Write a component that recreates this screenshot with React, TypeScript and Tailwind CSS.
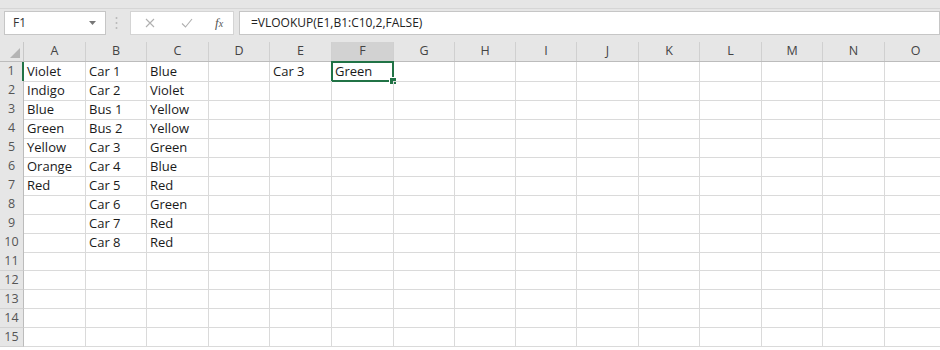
const colWidths = [62, 61, 62, 61, 62, 62, 61, 61, 61, 62, 61, 62, 61, 62, 62];
const colNames = ["A", "B", "C", "D", "E", "F", "G", "H", "I", "J", "K", "L", "M", "N", "O"];

const colA = ["Violet", "Indigo", "Blue", "Green", "Yellow", "Orange", "Red"];
const colB = ["Car 1", "Car 2", "Bus 1", "Bus 2", "Car 3", "Car 4", "Car 5", "Car 6", "Car 7", "Car 8"];
const colC = ["Blue", "Violet", "Yellow", "Yellow", "Green", "Blue", "Red", "Green", "Red", "Red"];

const cellValue = (row: number, col: number): string => {
  if (col === 0) return colA[row] ?? "";
  if (col === 1) return colB[row] ?? "";
  if (col === 2) return colC[row] ?? "";
  if (row === 0 && col === 4) return "Car 3";
  if (row === 0 && col === 5) return "Green";
  return "";
};

const gridCols = "grid grid-cols-[24px_62px_61px_62px_61px_62px_62px_61px_61px_61px_62px_61px_62px_61px_62px_62px]";

const FormulaBar = () => (
  <div className="h-[42px] bg-[#e6e6e6]">
    <div className="h-[9px] border-b border-[#d6d6d6]" />
    <div className="flex items-center h-[25px] mt-px">
      <div className="ml-[4px] w-[102px] h-[24px] bg-white border border-[#c6c6c6] flex items-center justify-between pl-[8px] pr-[9px] text-[12px] text-[#333]">
        <span>F1</span>
        <svg width="7" height="4" viewBox="0 0 7 4">
          <path d="M0 0h7L3.5 4z" fill="#777" />
        </svg>
      </div>
      <svg className="ml-[9px]" width="3" height="14" viewBox="0 0 3 14">
        <circle cx="1.5" cy="2" r="1" fill="#b8b8b8" />
        <circle cx="1.5" cy="7" r="1" fill="#b8b8b8" />
        <circle cx="1.5" cy="12" r="1" fill="#b8b8b8" />
      </svg>
      <div className="ml-[12px] w-[104px] h-[24px] bg-white border border-[#d4d4d4] flex items-center">
        <svg className="ml-[14px]" width="10" height="10" viewBox="0 0 10 10">
          <path d="M1 1l8 8M9 1l-8 8" stroke="#b0b0b0" strokeWidth="1.1" />
        </svg>
        <svg className="ml-[26px]" width="12" height="10" viewBox="0 0 12 10">
          <path d="M1 5.5l3.5 3.5L11 1" stroke="#b0b0b0" strokeWidth="1.1" fill="none" />
        </svg>
        <span className="ml-[22px] font-['Liberation_Serif',serif] italic text-[13px] text-[#555] leading-none">
          f<span className="text-[10px]">x</span>
        </span>
      </div>
      <div className="ml-[5px] flex-1 h-[24px] bg-white border border-[#c6c6c6] flex items-center pl-[11px] text-[12px] text-[#222]">
        =VLOOKUP(E1,B1:C10,2,FALSE)
      </div>
    </div>
  </div>
);

const HeaderRow = () => (
  <div className={`${gridCols} h-[20px] bg-[#e6e6e6] border-b border-[#bcbcbc]`}>
    <div className="relative border-r border-[#c8c8c8]">
      <svg className="absolute right-[3px] bottom-[3px]" width="10" height="10" viewBox="0 0 10 10">
        <path d="M10 0v10H0z" fill="#b4b4b4" />
      </svg>
    </div>
    {colNames.map((name) => (
      <div
        key={name}
        className={`flex items-center justify-center text-[12.5px] text-[#444] border-r border-[#d0d0d0] ${
          name === "F" ? "bg-[#d2d2d2] text-[#333]" : ""
        }`}
      >
        {name}
      </div>
    ))}
  </div>
);

export default function App() {
  const rows = Array.from({ length: 15 }, (_, i) => i);
  return (
    <div className="w-[940px] h-[350px] overflow-hidden bg-white font-['Open_Sans',sans-serif]">
      <FormulaBar />
      <HeaderRow />
      {rows.map((r) => (
        <div key={r} className={`${gridCols} h-[19px]`}>
          <div
            className={`bg-[#e6e6e6] border-b border-[#d2d2d2] flex items-center justify-center text-[12.5px] text-[#555] leading-none ${
              r === 0 ? "border-r-2 border-r-[#217346]" : "border-r border-r-[#bcbcbc]"
            }`}
          >
            {r + 1}
          </div>
          {colWidths.map((_, c) => {
            const selected = r === 0 && c === 5;
            return (
              <div
                key={c}
                className="relative border-r border-b border-[#dadada] px-[3px] text-[13px] leading-[19px] text-[#1a1a1a] whitespace-nowrap"
              >
                {cellValue(r, c)}
                {selected && (
                  <>
                    <div className="absolute -left-px -top-px right-[-1px] bottom-[-1px] border-2 border-[#217346]" />
                    <div className="absolute right-[-4px] bottom-[-4px] w-[6px] h-[6px] bg-[#217346] border border-white box-content" />
                  </>
                )}
              </div>
            );
          })}
        </div>
      ))}
    </div>
  );
}
